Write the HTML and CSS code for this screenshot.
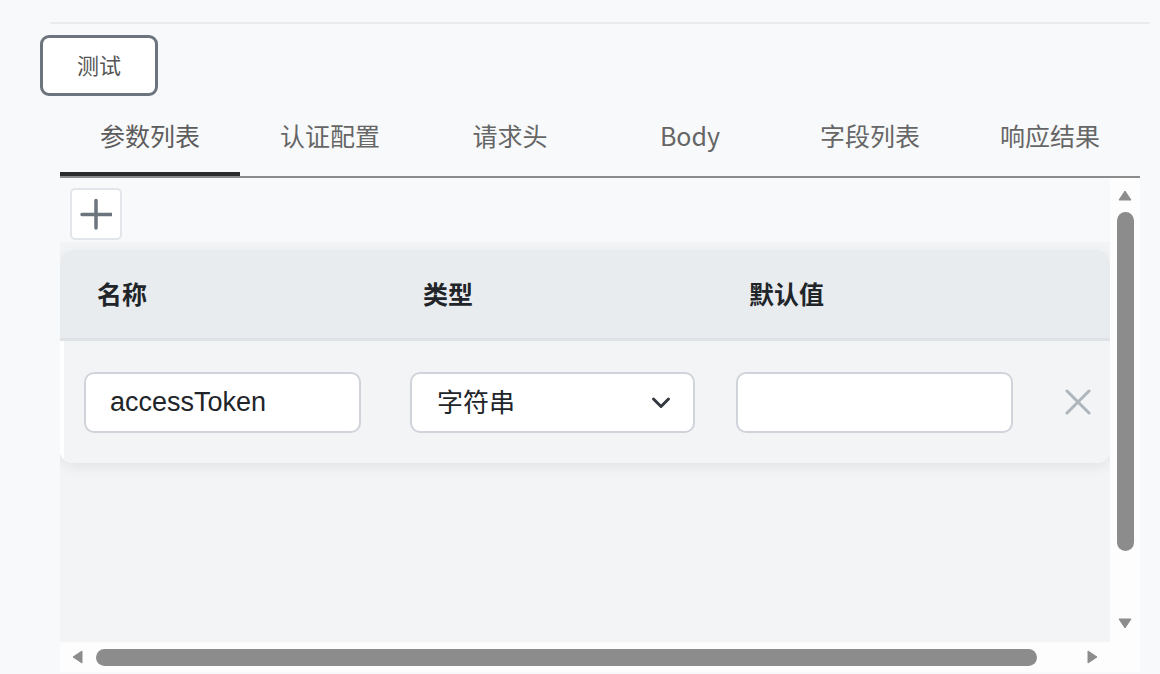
FILE: index.html
```html
<!DOCTYPE html>
<html lang="zh-CN">
<head>
    <meta charset="UTF-8">
    <meta name="viewport" content="width=device-width, initial-scale=1.0">
    <title>接口测试</title>
    <link rel="stylesheet" href="styles.css">
</head>
<body>
    <div class="topline"></div>
    <button class="test-btn">测试</button>

    <div class="tabs">
        <div class="tab active">参数列表</div>
        <div class="tab">认证配置</div>
        <div class="tab">请求头</div>
        <div class="tab">Body</div>
        <div class="tab">字段列表</div>
        <div class="tab">响应结果</div>
    </div>

    <div class="scroller">
        <div class="viewport">
            <div class="toolbar">
                <button class="add-btn" title="添加">
                    <svg width="32" height="32" viewBox="0 0 32 32">
                        <path d="M16 2.5v27.5M2 16.5h29.5" stroke="#6c757d" stroke-width="3.5" stroke-linecap="round" fill="none"/>
                    </svg>
                </button>
            </div>
            <div class="table-wrap">
                <div class="card">
                    <div class="grid head">
                        <div class="th">名称</div>
                        <div class="th">类型</div>
                        <div class="th">默认值</div>
                        <div></div>
                    </div>
                    <div class="grid row">
                        <input class="field name" type="text" value="accessToken">
                        <div class="field select">
                            <span>字符串</span>
                            <svg width="20" height="14" viewBox="0 0 20 14">
                                <path d="M2.5 3l7.5 7.5L17.5 3" stroke="#343a40" stroke-width="3" stroke-linecap="round" stroke-linejoin="round" fill="none"/>
                            </svg>
                        </div>
                        <input class="field value" type="text" value="">
                        <button class="remove" title="删除">
                            <svg width="26" height="26" viewBox="0 0 26 26">
                                <path d="M2 2l22 22M24 2L2 24" stroke="#adb5bd" stroke-width="3" stroke-linecap="round" fill="none"/>
                            </svg>
                        </button>
                    </div>
                </div>
            </div>
        </div>

        <div class="vbar">
            <svg class="arrow" width="14" height="11" viewBox="0 0 14 11"><path d="M7 1L13 10H1Z" fill="#8c8c8c" stroke="#8c8c8c" stroke-width="1" stroke-linejoin="round"/></svg>
            <div class="vthumb"></div>
            <svg class="arrow" width="14" height="11" viewBox="0 0 14 11"><path d="M7 10L13 1H1Z" fill="#8c8c8c" stroke="#8c8c8c" stroke-width="1" stroke-linejoin="round"/></svg>
        </div>

        <div class="hbar">
            <svg class="arrow" width="11" height="14" viewBox="0 0 11 14"><path d="M1 7L10 1V13Z" fill="#8c8c8c" stroke="#8c8c8c" stroke-width="1" stroke-linejoin="round"/></svg>
            <div class="hthumb"></div>
            <svg class="arrow" width="11" height="14" viewBox="0 0 11 14"><path d="M10 7L1 1V13Z" fill="#8c8c8c" stroke="#8c8c8c" stroke-width="1" stroke-linejoin="round"/></svg>
        </div>

        <div class="corner"></div>
    </div>
</body>
</html>
```

FILE: styles.css
```css
body {
    margin: 0;
    background-color: #f8f9fa;
    font-family: "Noto Sans CJK SC", "Liberation Sans", sans-serif;
    width: 1160px;
    height: 674px;
    overflow: hidden;
}
.topline {
    height: 2px;
    margin: 22px 10px 0 50px;
    background-color: #e9ecef;
}
.test-btn {
    display: block;
    margin: 11px 0 0 40px;
    width: 118px;
    height: 61px;
    background-color: white;
    border: 3px solid #6c757d;
    border-radius: 9px;
    color: #555;
    font-family: inherit;
    font-size: 22px;
    line-height: 30px;
    padding: 0 0 4px;
}
.tabs {
    display: flex;
    margin: 14px 20px 0 60px;
    border-bottom: 2px solid #8c8c8c;
}
.tab {
    width: 180px;
    text-align: center;
    font-size: 25px;
    line-height: 34px;
    color: #666;
    padding: 8px 0 20px;
    border-bottom: 4px solid transparent;
}
.tab.active {
    border-bottom-color: #2b2b2b;
    color: #5c5c5c;
}
.scroller {
    display: grid;
    grid-template-columns: 1050px 30px;
    grid-template-rows: 464px 30px;
    margin-left: 60px;
    width: 1080px;
}
.viewport {
    overflow: hidden;
    display: flex;
    flex-direction: column;
}
.toolbar {
    padding: 10px;
    height: 44px;
    flex-shrink: 0;
}
.add-btn {
    width: 52px;
    height: 52px;
    padding: 0;
    display: flex;
    align-items: center;
    justify-content: center;
    background-color: white;
    border: 2px solid #e2e5e9;
    border-radius: 5px;
}
.table-wrap {
    flex: 1;
    background-color: #f3f4f6;
    padding-top: 8px;
}
.card {
    background-color: white;
    border-radius: 13px;
    overflow: hidden;
    box-shadow: 0 4px 14px rgba(0, 0, 0, 0.07);
}
.grid {
    display: grid;
    grid-template-columns: 326px 326px 326px 1fr;
    padding-left: 24px;
    align-items: center;
}
.head {
    height: 88px;
    background-color: #e9ecef;
    border-bottom: 3px solid #dee2e6;
}
.th {
    padding-left: 13px;
    font-size: 25px;
    font-weight: bold;
    color: #212529;
    line-height: 34px;
    padding-bottom: 2px;
}
.row {
    height: 122px;
    background-color: #f3f4f6;
    border-left: 4px solid white;
    padding-left: 20px;
}
.field {
    box-sizing: border-box;
    height: 61px;
    margin-top: 1px;
    background-color: white;
    border: 2px solid #d0d4da;
    border-radius: 10px;
    font-size: 27px;
    color: #212529;
    outline: none;
}
.name {
    width: 277px;
    padding: 0 24px;
    font-family: "Liberation Sans", "Noto Sans CJK SC", sans-serif;
}
.value {
    width: 277px;
}
.select {
    width: 285px;
    display: flex;
    align-items: center;
    justify-content: space-between;
    padding: 0 22px 0 25px;
    font-size: 26px;
    line-height: 34px;
}
.select span {
    padding-bottom: 3px;
}
.remove {
    background: none;
    border: none;
    padding: 0;
    margin-left: 3px;
    width: 26px;
    height: 26px;
    display: flex;
}
.vbar {
    background-color: #fdfdfd;
    display: flex;
    flex-direction: column;
    align-items: center;
    padding: 12px 0 13px;
}
.vthumb {
    width: 17px;
    height: 339px;
    margin-top: 11px;
    margin-bottom: auto;
    background-color: #8c8c8c;
    border-radius: 9px;
}
.hbar {
    background-color: #fdfdfd;
    display: flex;
    align-items: center;
    padding: 0 12px;
}
.hthumb {
    width: 941px;
    height: 17px;
    margin-left: 13px;
    margin-right: auto;
    background-color: #8c8c8c;
    border-radius: 9px;
}
.arrow {
    display: block;
    flex-shrink: 0;
}
.corner {
    background-color: #fdfdfd;
}
```
